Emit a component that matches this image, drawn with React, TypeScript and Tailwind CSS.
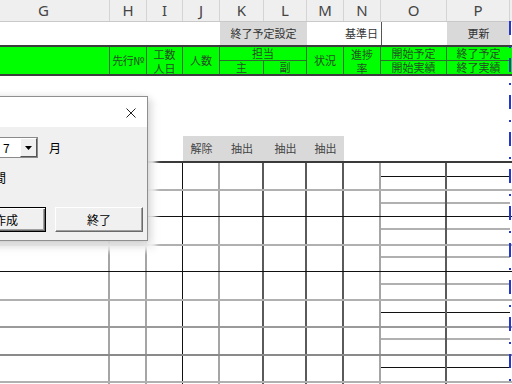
import React from "react";

const jp = "font-['Noto_Sans_CJK_JP','Noto_Sans',sans-serif]";

type Row = { cls: string; sub: string; subH: string };

const rows: Row[] = [
  { cls: "h-[28px] border-t-2 border-[#3a3a3a]", sub: "border-b border-[#111]", subH: "h-[14px]" },
  { cls: "h-[27px] border-t-2 border-[#b0b0b0]", sub: "border-b-2 border-[#b0b0b0]", subH: "h-[13px]" },
  { cls: "h-[28px] border-t border-[#111]", sub: "border-b-2 border-[#b0b0b0]", subH: "h-[13px]" },
  { cls: "h-[27px] border-t-2 border-[#b0b0b0]", sub: "border-b-2 border-[#b0b0b0]", subH: "h-[12px]" },
  { cls: "h-[28px] border-t border-[#111]", sub: "border-b-2 border-[#b0b0b0]", subH: "h-[13px]" },
  { cls: "h-[27px] border-t-2 border-[#b0b0b0]", sub: "border-b border-[#111]", subH: "h-[12px]" },
  { cls: "h-[28px] border-t-2 border-[#9a9a9a]", sub: "border-b-2 border-[#b0b0b0]", subH: "h-[12px]" },
  { cls: "h-[27px] border-t-2 border-[#8a8a8a]", sub: "border-b border-[#111]", subH: "h-[12px]" },
  { cls: "h-[27px] border-t-2 border-[#b0b0b0]", sub: "border-b-2 border-[#b0b0b0]", subH: "h-[12px]" },
];

function GridRow({ r }: { r: Row }) {
  return (
    <div className={`flex shrink-0 ${r.cls}`}>
      <div className="w-[110px] border-r-2 border-[#a5a5a5]" />
      <div className="w-[37px] border-r-2 border-[#a5a5a5]" />
      <div className="w-[36px] border-r border-[#111]" />
      <div className="w-[37px] border-r-2 border-[#a5a5a5]" />
      <div className="w-[44px] border-r-2 border-[#5a5a5a]" />
      <div className="w-[43px] border-r-2 border-[#5a5a5a]" />
      <div className="w-[37px] border-r-2 border-[#5a5a5a]" />
      <div className="w-[37px] border-r-2 border-[#a5a5a5]" />
      <div className="w-[66px] border-r-2 border-[#5a5a5a]">
        <div className={`${r.subH} ${r.sub}`} />
      </div>
      <div className="w-[63px]">
        <div className={`${r.subH} ${r.sub}`} />
      </div>
    </div>
  );
}

export default function App() {
  const g = "text-[#234f23]";
  return (
    <div className={`relative w-[512px] h-[384px] overflow-hidden bg-white ${jp}`}>
      {/* column headers */}
      <div className="flex h-[22px] bg-[#efefef] border-b border-[#c9c9c9] text-[15px] leading-[21px] text-[#444] font-['Noto_Sans',sans-serif]">
        <div className="w-[110px] pr-[22px] text-center border-r border-[#d4d4d4]">G</div>
        <div className="w-[37px] text-center border-r border-[#d4d4d4]">H</div>
        <div className="w-[36px] text-center border-r border-[#d4d4d4]">I</div>
        <div className="w-[37px] text-center border-r border-[#d4d4d4]">J</div>
        <div className="w-[44px] text-center border-r border-[#d4d4d4]">K</div>
        <div className="w-[43px] text-center border-r border-[#d4d4d4]">L</div>
        <div className="w-[37px] text-center border-r border-[#d4d4d4]">M</div>
        <div className="w-[37px] text-center border-r border-[#d4d4d4]">N</div>
        <div className="w-[66px] text-center border-r border-[#d4d4d4]">O</div>
        <div className="w-[63px] text-center border-r border-[#d4d4d4]">P</div>
      </div>

      {/* row 1 */}
      <div className="flex h-[23px] text-[11px] leading-[23px] text-[#333]">
        <div className="w-[220px]" />
        <div className="w-[87px] bg-[#d9d9d9] text-center">終了予定設定</div>
        <div className="w-[74px] text-right pr-[3px]">基準日</div>
        <div className="w-[66px] border-l border-[#555]" />
        <div className="w-[63px] bg-[#d9d9d9] text-center">更新</div>
      </div>

      {/* green header */}
      <div className={`flex h-[31px] border-y-2 border-[#3c3c3c] bg-[#00ff00] text-[11px] ${g}`}>
        <div className="w-[110px] border-r border-[#2c6e2c]" />
        <div className="w-[37px] border-r border-[#2c6e2c] flex items-center justify-center whitespace-nowrap tracking-[-0.5px]">先行№</div>
        <div className="w-[36px] border-r border-[#2c6e2c] flex flex-col items-center leading-[13px]">
          <span className="mt-[1px]">工数</span>
          <span className="mt-[1px]">人日</span>
        </div>
        <div className="w-[37px] border-r border-[#2c6e2c] flex items-center justify-center">人数</div>
        <div className="w-[87px] border-r border-[#2c6e2c] flex flex-col">
          <div className="h-[14px] border-b border-[#2c6e2c] text-center leading-[13px]">担当</div>
          <div className="flex flex-1 leading-[13px]">
            <div className="w-[44px] border-r border-[#2c6e2c] text-center">主</div>
            <div className="flex-1 text-center">副</div>
          </div>
        </div>
        <div className="w-[37px] border-r border-[#2c6e2c] flex items-center justify-center">状況</div>
        <div className="w-[37px] border-r border-[#2c6e2c] flex flex-col items-center leading-[13px]">
          <span className="mt-[1px]">進捗</span>
          <span className="mt-[1px]">率</span>
        </div>
        <div className="w-[66px] border-r border-[#2c6e2c] flex flex-col">
          <div className="h-[14px] border-b border-[#2c6e2c] text-center leading-[13px]">開始予定</div>
          <div className="flex-1 text-center leading-[13px]">開始実績</div>
        </div>
        <div className="w-[63px] flex flex-col">
          <div className="h-[14px] border-b border-[#2c6e2c] text-center leading-[13px]">終了予定</div>
          <div className="flex-1 text-center leading-[13px]">終了実績</div>
        </div>
      </div>

      {/* gap */}
      <div className="h-[60px]" />

      {/* filter buttons */}
      <div className="flex h-[25px] pl-[183px] text-[11px] leading-[25px] text-[#444]">
        <div className="flex bg-[#d9d9d9]">
          <div className="w-[37px] text-center">解除</div>
          <div className="w-[44px] text-center">抽出</div>
          <div className="w-[43px] text-center">抽出</div>
          <div className="w-[37px] text-center">抽出</div>
        </div>
      </div>

      {/* grid */}
      <div className="flex flex-col">
        {rows.map((r, i) => (
          <GridRow key={i} r={r} />
        ))}
      </div>

      {/* page break line */}
      <div className="absolute left-[509px] top-[21px] w-[2px] h-[363px] bg-[repeating-linear-gradient(to_bottom,#2236d0_0px,#2236d0_14px,transparent_14px,transparent_25px,#2236d0_25px,#2236d0_27px,transparent_27px,transparent_37px)]" />

      {/* dialog */}
      <div className="absolute left-[-100px] top-[96px] w-[248px] h-[145px] border border-[#8f8f8f] bg-[#f0f0f0] shadow-[0_2px_8px_rgba(0,0,0,0.22),5px_7px_5px_3px_rgba(246,246,246,0.92)] text-[12px] text-black">
        <div className="relative h-[30px] bg-white">
          <svg className="absolute right-[11px] top-[11px]" width="10" height="10" viewBox="0 0 10 10">
            <path d="M0.5 0.5 L9.5 9.5 M9.5 0.5 L0.5 9.5" stroke="#222" strokeWidth="1" fill="none" />
          </svg>
        </div>
        <div className="flex flex-col">
          <div className="mt-[10px] flex h-[21px] items-center">
            <div className="ml-[79px] flex h-[21px] border border-[#8a8a8a] bg-white">
              <div className="w-[39px] pl-[22px] leading-[19px]">7</div>
              <div className="flex w-[17px] items-center justify-center border-t border-l border-t-[#fff] border-l-[#fff] border-r border-b border-r-[#555] border-b-[#555] bg-[#f0f0f0]">
                <svg width="7" height="4" viewBox="0 0 7 4">
                  <polygon points="0,0 7,0 3.5,4" fill="#000" />
                </svg>
              </div>
            </div>
            <span className="ml-[11px] leading-[21px]">月</span>
          </div>
          <div className="mt-[12px] w-[105px] text-right leading-[16px]">期間</div>
          <div className="mt-[21px] flex h-[25px] items-stretch">
            <div className="ml-[65px] flex w-[80px] items-center justify-center border border-black bg-[#f0f0f0] shadow-[inset_1px_1px_0_#fff,inset_-1px_-1px_0_#696969,inset_-2px_-2px_0_#a0a0a0]">
              作成
            </div>
            <div className="ml-[9px] flex w-[88px] items-center justify-center border border-t-[#fff] border-l-[#fff] border-r-[#6a6a6a] border-b-[#6a6a6a] bg-[#f0f0f0] shadow-[inset_-1px_-1px_0_#a0a0a0]">
              終了
            </div>
          </div>
        </div>
      </div>
    </div>
  );
}
